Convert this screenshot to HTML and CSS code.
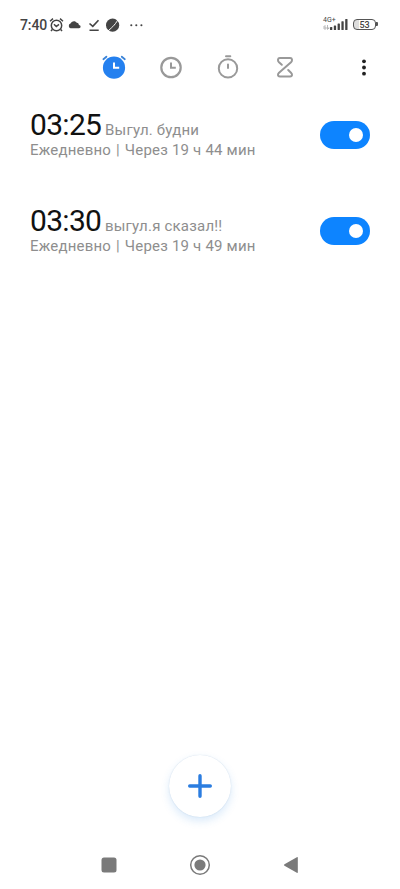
FILE: index.html
```html
<!DOCTYPE html>
<html lang="ru">
<head>
<meta charset="utf-8">
<title>Будильник</title>
<link rel="stylesheet" href="styles.css">
</head>
<body>
<div class="screen">
  <header class="status">
    <span class="clock">7:40</span>
    <svg class="notices" width="98" height="20" viewBox="0 0 98 20" fill="none" stroke="#444" stroke-width="1.5">
      <circle cx="8.5" cy="10.5" r="5.2"/>
      <path d="M2 6.2 5 3.6M15 6.2 12 3.6M4.3 14.5 3 16M12.700 14.500 14 16M6 9.300 8.300 11.500 11 9.300"/>
      <path d="M22.500 13.200a2.400 2.400 0 0 1 0-4.600c.7-2.700 5-3.400 6.300-.8 1.600.2 2 1.200 2.100 2.200 2.200.2 2.200 3.200.1 3.200z" fill="#444" stroke="none"/>
      <path d="M41.500 8.500 44.800 11.400 50.500 5.200M41.500 15.200H50.700" stroke-width="1.600"/>
      <circle cx="64.600" cy="10.200" r="6.600" fill="#444" stroke="none"/>
      <path d="M59.500 16.500C63 13 66.500 11 70 4.500" stroke="#fff" stroke-width="1"/>
      <g fill="#444" stroke="none"><circle cx="83.300" cy="10.300" r="1.050"/><circle cx="88.300" cy="10.300" r="1.050"/><circle cx="93.400" cy="10.300" r="1.050"/></g>
    </svg>
    <div class="signal">
      <div class="network"><span>4G+</span>
        <svg width="7" height="5" viewBox="0 0 7 5" fill="none" stroke="#aaa" stroke-width=".8"><path d="M2 5V.5L.5 2M4.500 0V4.500L6 3M0 3H6.500"/></svg>
      </div>
      <svg width="18" height="13" viewBox="0 0 18 13" fill="#444"><rect x="0" y="9" width="2.300" height="3" rx=".6"/><rect x="3.800" y="7.500" width="2.300" height="4.500" rx=".6"/><rect x="7.600" y="5.500" width="2.300" height="6.500" rx=".6"/><rect x="11.400" y="3.200" width="2.300" height="8.800" rx=".6"/><rect x="15.200" y="1" width="2.300" height="11" rx=".6"/></svg>
      <div class="battery">53</div><i class="battery-tip"></i>
    </div>
  </header>

  <nav class="tabs">
    <svg width="28" height="28" viewBox="0 0 28 28" fill="none" stroke-linecap="round">
      <circle cx="14" cy="14.700" r="11.100" fill="#2480ef"/>
      <path d="M3.400 6.200 6.400 3.700M24.800 6.200 21.800 3.700" stroke="#3b83d6" stroke-width="1.800"/>
      <path d="M14 10.500V14.800H18.200" stroke="#fff" stroke-width="2" stroke-linecap="square"/>
    </svg>
    <svg width="28" height="28" viewBox="0 0 28 28" fill="none" stroke="#999">
      <circle cx="14" cy="14.500" r="9.700" stroke-width="2.200"/><path d="M14 10.500V14.800H17.800" stroke-width="2" stroke-linecap="square"/>
    </svg>
    <svg width="28" height="28" viewBox="0 0 28 28" fill="none" stroke="#999" stroke-width="2" stroke-linecap="round">
      <circle cx="14" cy="15.400" r="9.200"/><path d="M14 11.500V15M12 3.200H16.300"/>
    </svg>
    <svg width="28" height="28" viewBox="0 0 28 28" fill="none" stroke="#999" stroke-width="2" stroke-linecap="round" stroke-linejoin="round">
      <path d="M10.800 11.800 8 9.300C6.300 7.600 6.800 5 8.800 5H19.200C21.200 5 21.700 7.600 20 9.300L8 19.700C6.300 21.400 6.800 23.400 8.800 23.400H19.200C21.200 23.400 21.700 21.400 20 19.700L17.200 17"/>
    </svg>
    <svg class="more" width="8" height="28" viewBox="0 0 8 28" fill="#222"><circle cx="4" cy="8.300" r="1.900"/><circle cx="4" cy="14.500" r="1.900"/><circle cx="4" cy="20.700" r="1.900"/></svg>
  </nav>

  <main class="alarms">
    <section class="alarm">
      <div class="info">
        <div class="headline"><span class="time">03:25</span><span class="label">Выгул. будни</span></div>
        <div class="detail">Ежедневно&nbsp;<b>|</b>&nbsp;Через 19 ч 44 мин</div>
      </div>
      <div class="switch"><i></i></div>
    </section>
    <section class="alarm">
      <div class="info">
        <div class="headline"><span class="time">03:30</span><span class="label">выгул.я сказал!!</span></div>
        <div class="detail">Ежедневно&nbsp;<b>|</b>&nbsp;Через 19 ч 49 мин</div>
      </div>
      <div class="switch"><i></i></div>
    </section>
  </main>

  <div class="add">
    <svg width="26" height="26" viewBox="0 0 26 26" stroke="#2b7de0" stroke-width="3.400" stroke-linecap="round"><path d="M13 2.700V23.300M2.700 13H23.300"/></svg>
  </div>

  <footer class="system">
    <svg width="22" height="22" viewBox="0 0 22 22" fill="#7a7a7a"><rect x="3.500" y="3.500" width="15" height="15" rx="2.500"/></svg>
    <svg width="22" height="22" viewBox="0 0 22 22" fill="#7a7a7a"><circle cx="11" cy="11" r="9.300" fill="none" stroke="#7a7a7a" stroke-width="1.500"/><circle cx="11" cy="11" r="5.600"/></svg>
    <svg width="22" height="22" viewBox="0 0 22 22" fill="#7a7a7a"><path d="M4.500 10.300 16.800 3.200Q17.800 2.800 17.800 3.800V18.200Q17.800 19.200 16.800 18.800L4.500 11.700Q3.300 11 4.500 10.300Z"/></svg>
  </footer>
</div>
</body>
</html>
```

FILE: styles.css
```css
* { box-sizing: border-box; }
body { margin: 0; background: #fff; font-family: Roboto, "Liberation Sans", sans-serif; }
.screen { width: 400px; height: 889px; display: flex; flex-direction: column; overflow: hidden; }
svg { display: block; flex: none; }

.status { height: 48px; display: flex; align-items: center; padding: 0 22px 0 20px; color: #444; }
.clock { font-size: 14px; font-weight: 500; line-height: 20px; width: 28px; letter-spacing: -.1px; padding-top: 2px; }
.notices { margin-top: 1px; }
.signal { margin-left: auto; display: flex; align-items: center; }
.network { width: 15px; margin-right: -8px; font-size: 7px; line-height: 7px; margin-top: -1px; }
.network svg { margin-top: 1px; }
.signal > svg { margin-right: 5px; margin-top: 1px; }
.battery { width: 23px; height: 11px; border: 1px solid #555; border-radius: 4px; font-size: 9px; line-height: 10px; text-align: center; font-weight: 500; background: linear-gradient(90deg, #ddd 25%, #fff 25%); }
.battery-tip { width: 2px; height: 4px; background: #555; border-radius: 0 1px 1px 0; }

.tabs { height: 50px; display: flex; align-items: flex-start; gap: 29px; padding: 5px 32px 0 100px; }
.more { margin-left: auto; }

.alarms { flex: 1; padding: 9px 30px 0; }
.alarm { height: 96px; display: flex; justify-content: space-between; align-items: flex-start; }
.headline { height: 34px; display: flex; align-items: baseline; line-height: 35px; white-space: nowrap; }
.time { width: 75px; font-size: 30px; letter-spacing: -.7px; color: #111; }
.label, .detail { font-size: 15px; color: #8e8e8e; letter-spacing: .2px; }
.detail { line-height: 18px; white-space: nowrap; }
.detail b { font-weight: 400; margin: 0 1px; }
.switch { width: 50px; height: 28px; margin-top: 14px; border-radius: 14px; background: #0d84ff; padding: 7px; display: flex; justify-content: flex-end; }
.switch i { width: 14px; height: 14px; border-radius: 50%; background: #fff; }

.add { width: 62px; height: 62px; margin: 0 auto 23px; border-radius: 50%; background: #fff; box-shadow: 0 0 1px rgba(40,100,160,.25), 0 4px 9px rgba(50,140,230,.18); display: flex; align-items: center; justify-content: center; }
.system { height: 49px; padding: 0 98px; display: flex; justify-content: space-between; align-items: center; }
```
